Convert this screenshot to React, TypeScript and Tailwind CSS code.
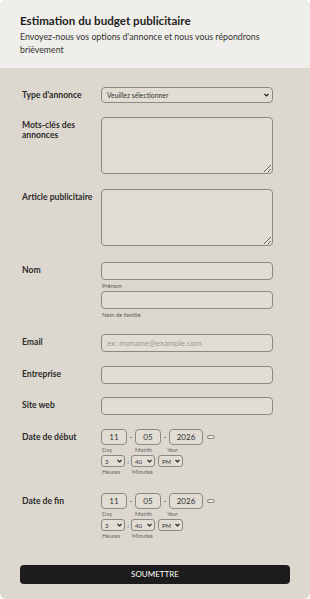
import type { ReactNode } from "react";

const font = { fontFamily: "Lato, 'Open Sans', sans-serif" };

function Row({
  label,
  className,
  children,
}: {
  label: ReactNode;
  className?: string;
  children: ReactNode;
}) {
  return (
    <div className={`grid grid-cols-[79px_172px] ${className ?? ""}`}>
      <div className="pt-[3px] pr-2 text-[8.6px] font-bold leading-[10px] text-[#2b2b2b]">
        {label}
      </div>
      <div>{children}</div>
    </div>
  );
}

function TextBox({ placeholder }: { placeholder?: string }) {
  return (
    <input
      placeholder={placeholder}
      className="block h-[18px] w-full rounded-[4px] border border-[#8c8983] bg-[#e1ddd5] px-[5px] text-[8px] text-[#333] placeholder:text-[#9b9892] outline-none"
    />
  );
}

function Area() {
  return (
    <textarea className="block h-[57px] w-full resize-y rounded-[4px] border border-[#8c8983] bg-[#e1ddd5] outline-none" />
  );
}

function Chevron() {
  return (
    <svg width="5" height="4" viewBox="0 0 10 7" className="shrink-0">
      <path d="M1 1.5 L5 5.5 L9 1.5" fill="none" stroke="#222" strokeWidth="2.2" />
    </svg>
  );
}

function MiniSelect({ value, w }: { value: string; w: string }) {
  return (
    <div
      className={`flex h-[12px] ${w} items-center justify-between rounded-[3px] border border-[#8c8983] bg-[#e1ddd5] pl-[3px] pr-[2px] text-[6px] text-[#333]`}
    >
      <span>{value}</span>
      <Chevron />
    </div>
  );
}

function DateTime() {
  const box =
    "flex h-[16px] items-center justify-center rounded-[4px] border border-[#8c8983] bg-[#e1ddd5] text-[8px] text-[#333]";
  return (
    <div className="text-[#666]">
      <div className="flex items-center">
        <div className={`${box} w-[26px]`}>11</div>
        <span className="w-[8px] text-center text-[8px] text-[#444]">-</span>
        <div className={`${box} w-[26px]`}>05</div>
        <span className="w-[8px] text-center text-[8px] text-[#444]">-</span>
        <div className={`${box} w-[34px]`}>2026</div>
        <div className="ml-[4px] h-[4px] w-[8px] rounded-full border border-[#8c8983] bg-[#e9e6e0]" />
      </div>
      <div className="flex h-[10px] items-center text-[5.8px]">
        <span className="w-[33px] pl-[1px]">Day</span>
        <span className="w-[33px] pl-[1px]">Month</span>
        <span>Year</span>
      </div>
      <div className="flex items-center">
        <MiniSelect value="3" w="w-[24px]" />
        <span className="w-[6px] text-center text-[6px] text-[#444]">:</span>
        <MiniSelect value="40" w="w-[24px]" />
        <div className="w-[3px]" />
        <MiniSelect value="PM" w="w-[25px]" />
      </div>
      <div className="flex h-[10px] items-center text-[5.8px]">
        <span className="w-[31px] pl-[1px]">Heures</span>
        <span>Minutes</span>
      </div>
    </div>
  );
}

export default function App() {
  return (
    <div style={font} className="min-h-[599px] w-[310px] overflow-hidden rounded-[6px] bg-[#ddd8cf]">
      <header className="h-[68px] bg-[#efeeea] px-5 pt-[13px]">
        <h1 className="text-[11.6px] font-bold leading-[15px] text-[#1e1e1e]">
          Estimation du budget publicitaire
        </h1>
        <p className="mt-[2px] text-[8.8px] leading-[13px] text-[#333]">
          Envoyez-nous vos options d'annonce et nous vous répondrons brièvement
        </p>
      </header>

      <form className="px-[22px] pt-[19px]" onSubmit={(e) => e.preventDefault()}>
        <Row label="Type d'annonce">
          <div className="flex h-[16px] w-full items-center justify-between rounded-[4px] border border-[#8c8983] bg-[#e1ddd5] pl-[5px] pr-[3px] text-[6.8px] text-[#333]">
            <span>Veuillez sélectionner</span>
            <Chevron />
          </div>
        </Row>

        <Row label="Mots-clés des annonces" className="mt-[14px]">
          <Area />
        </Row>

        <Row label="Article publicitaire" className="mt-[15px]">
          <Area />
        </Row>

        <Row label="Nom" className="mt-[16px]">
          <TextBox />
          <div className="h-[11px] pl-[1px] pt-[2px] text-[5.8px] leading-[8px] text-[#555]">Prénom</div>
          <TextBox />
          <div className="h-[11px] pl-[1px] pt-[2px] text-[5.8px] leading-[8px] text-[#555]">Nom de famille</div>
        </Row>

        <Row label="Email" className="mt-[14px]">
          <TextBox placeholder="ex: myname@example.com" />
        </Row>

        <Row label="Entreprise" className="mt-[14px]">
          <TextBox />
        </Row>

        <Row label="Site web" className="mt-[13px]">
          <TextBox />
        </Row>

        <Row label="Date de début" className="mt-[14px]">
          <DateTime />
        </Row>

        <Row label="Date de fin" className="mt-[16px]">
          <DateTime />
        </Row>

        <div className="-mx-[2px] mt-[18px]">
          <button
            type="submit"
            className="h-[19px] w-full rounded-[4px] bg-[#1c1c1c] text-[8px] font-normal text-white"
          >
            SOUMETTRE
          </button>
        </div>
      </form>
    </div>
  );
}
